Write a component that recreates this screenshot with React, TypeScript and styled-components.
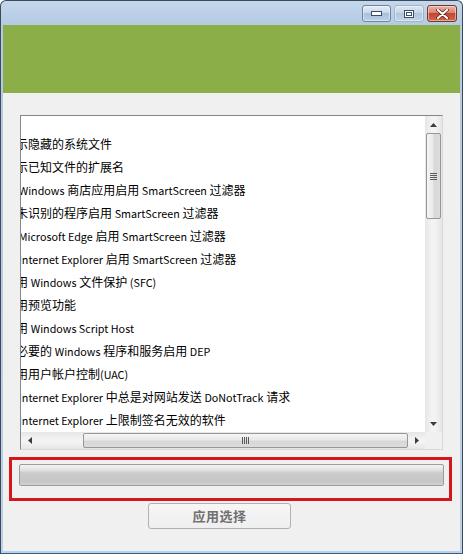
import { useLayoutEffect, useRef } from "react";
import styled, { createGlobalStyle, css } from "styled-components";

const GlobalStyle = createGlobalStyle`
    html, body {
        margin: 0;
        padding: 0;
        background: #ffffff;
    }
    body {
        font-family: "Noto Sans CJK SC", "DejaVu Sans", sans-serif;
    }
`

const Window = styled.div`
    box-sizing: border-box;
    width: 463px;
    height: 554px;
    display: flex;
    flex-direction: column;
    border: 1px solid #3d4a5a;
    border-bottom-color: #2f5f86;
    border-radius: 6px 6px 0 0;
    background: linear-gradient(to bottom, #c4d7ec 0px, #b3cae3 24px, #bcd0e6 100%);
    overflow: hidden;
`

const TitleBar = styled.div`
    height: 24px;
    flex-shrink: 0;
    display: flex;
    justify-content: flex-end;
    align-items: flex-start;
    gap: 3px;
    padding: 4px 5px 0 0;
    box-sizing: border-box;
`

const captionVariants = {
    min: css`
        width: 29px;
        border-color: #6f84a2;
        background: linear-gradient(to bottom, #e6eef8 0%, #c9d8ea 45%, #aac0db 50%, #bcd0e6 100%);
    `,
    max: css`
        width: 30px;
        border-color: #9fb4cf;
        background: linear-gradient(to bottom, #dbe6f2 0%, #c6d6e9 45%, #b2c7df 50%, #c2d4e8 100%);
    `,
    close: css`
        width: 30px;
        border-color: #7b3326;
        background: linear-gradient(to bottom, #eab3a5 0%, #d9826c 45%, #c4472f 50%, #d0664c 100%);
    `,
}

const CaptionButton = styled.div<{ $kind: keyof typeof captionVariants }>`
    box-sizing: border-box;
    height: 17px;
    border: 1px solid;
    border-radius: 3px;
    display: flex;
    align-items: center;
    justify-content: center;
    box-shadow: inset 0 0 0 1px rgba(255, 255, 255, 0.45);
    ${p => captionVariants[p.$kind]}
`

const Client = styled.div`
    flex: 1;
    margin: 0 2px 2px 2px;
    background: #f0f0f0;
    display: flex;
    flex-direction: column;
`

const Banner = styled.div`
    height: 68px;
    flex-shrink: 0;
    background: #8bae49;
`

const Body = styled.div`
    flex: 1;
    display: flex;
    flex-direction: column;
    padding: 22px 0 0 0;
`

const ListBox = styled.div`
    box-sizing: border-box;
    height: 335px;
    margin: 0 17px 0 17px;
    border: 1px solid #828790;
    border-right-color: #d5d9de;
    border-bottom-color: #d5d9de;
    background: #ffffff;
    display: grid;
    grid-template-columns: 1fr 17px;
    grid-template-rows: 1fr 17px;
`

const Viewport = styled.div`
    overflow: hidden;
    min-width: 0;
    min-height: 0;
`

const Rows = styled.div`
    width: 464px;
    padding-top: 16px;
`

const Row = styled.div`
    height: 23px;
    display: flex;
    align-items: center;
    gap: 8px;
    padding-left: 20px;
    white-space: nowrap;
    font-family: "Noto Sans CJK SC", sans-serif;
    font-size: 12px;
    color: #000;
`

// the latin parts of the labels are set smaller, like Microsoft YaHei draws them
const Latin = styled.span`
    font-size: 10.75px;
`

const Check = styled.span`
    box-sizing: border-box;
    width: 13px;
    height: 13px;
    flex-shrink: 0;
    border: 1px solid #8f8f8f;
    background: linear-gradient(135deg, #dcdcdc, #fbfbfb);
`

const VScroll = styled.div`
    display: flex;
    flex-direction: column;
    background: linear-gradient(to right, #e6e6e6, #f3f3f3 40%, #f3f3f3 60%, #e6e6e6);
`

const HScroll = styled.div`
    display: flex;
    background: linear-gradient(to bottom, #e6e6e6, #f3f3f3 40%, #f3f3f3 60%, #e6e6e6);
`

const Corner = styled.div`
    background: #f0f0f0;
`

const ArrowButton = styled.div`
    width: 17px;
    height: 17px;
    flex-shrink: 0;
    display: flex;
    align-items: center;
    justify-content: center;
`

const Track = styled.div<{ $size: number }>`
    flex: 0 0 ${p => p.$size}px;
`

const Thumb = styled.div<{ $vertical?: boolean; $size: number }>`
    box-sizing: border-box;
    flex: 0 0 ${p => p.$size}px;
    border: 1px solid #979797;
    border-radius: 2px;
    display: flex;
    align-items: center;
    justify-content: center;
    ${p => p.$vertical ? css`
        margin: 0 1px;
        background: linear-gradient(to right, #f5f5f5, #e9e9e9 45%, #d8d8d8 55%, #dcdcdc);
    ` : css`
        margin: 1px 0;
        background: linear-gradient(to bottom, #f5f5f5, #e9e9e9 45%, #d8d8d8 55%, #dcdcdc);
    `}
`

const Fill = styled.div`
    flex: 1;
`

const Highlight = styled.div`
    box-sizing: border-box;
    margin: 7px 8px 0 6px;
    height: 44px;
    border: 3px solid #d4161d;
    padding: 4px 5px 0 7px;
`

const Progress = styled.div`
    box-sizing: border-box;
    height: 22px;
    border: 1px solid #9c9c9c;
    border-radius: 2px;
    background: linear-gradient(to bottom, #f3f3f3 0%, #e2e2e2 25%, #cbcbcb 40%, #c6c6c6 80%, #d2d2d2 100%);
`

const ApplyButton = styled.button`
    box-sizing: border-box;
    margin: 2px 0 0 145px;
    width: 143px;
    height: 26px;
    border: 1px solid #b1b1b1;
    border-radius: 3px;
    background: linear-gradient(to bottom, #f6f6f6, #efefef);
    font-family: "Noto Sans CJK SC", "DejaVu Sans", sans-serif;
    font-size: 13px;
    font-weight: bold;
    color: #707070;
    letter-spacing: 0.5px;
    padding: 0;
    line-height: 24px;
`

const items = [
    "显示隐藏的系统文件",
    "显示已知文件的扩展名",
    "为 Windows 商店应用启用 SmartScreen 过滤器",
    "为未识别的程序启用 SmartScreen 过滤器",
    "为 Microsoft Edge 启用 SmartScreen 过滤器",
    "为 Internet Explorer 启用 SmartScreen 过滤器",
    "启用 Windows 文件保护 (SFC)",
    "启用预览功能",
    "启用 Windows Script Host",
    "为必要的 Windows 程序和服务启用 DEP",
    "启用用户帐户控制(UAC)",
    "在 Internet Explorer 中总是对网站发送 DoNotTrack 请求",
    "在 Internet Explorer 上限制签名无效的软件",
]

function Label({ text }: { text: string }) {
    const parts = text.split(/([A-Za-z(][A-Za-z() ]*[A-Za-z)])/)
    return (
        <span>
            {parts.map((part, i) => i % 2 ? <Latin key={i}>{part}</Latin> : part)}
        </span>
    )
}

function Arrow({ dir }: { dir: "up" | "down" | "left" | "right" }) {
    const pts = {
        up: "0,4 3.5,0 7,4",
        down: "0,0 3.5,4 7,0",
        left: "4,0 0,3.5 4,7",
        right: "0,0 4,3.5 0,7",
    }[dir]
    const vertical = dir === "up" || dir === "down"
    return (
        <svg width={vertical ? 7 : 4} height={vertical ? 4 : 7} viewBox={vertical ? "0 0 7 4" : "0 0 4 7"}>
            <polygon points={pts} fill="#3c3c3c" />
        </svg>
    )
}

function Grip({ vertical }: { vertical?: boolean }) {
    return vertical ? (
        <svg width="7" height="7" viewBox="0 0 7 7">
            {[0, 2, 4, 6].map(y => <rect key={y} x="0" y={y} width="7" height="1" fill="#5a5a5a" />)}
        </svg>
    ) : (
        <svg width="7" height="7" viewBox="0 0 7 7">
            {[0, 2, 4, 6].map(x => <rect key={x} x={x} y="0" width="1" height="7" fill="#5a5a5a" />)}
        </svg>
    )
}

export default function App() {
    const viewport = useRef<HTMLDivElement>(null)

    // list is scrolled to the right, like in the screenshot
    useLayoutEffect(() => {
        if (viewport.current) viewport.current.scrollLeft = 58
    }, [])

    return (
        <>
            <GlobalStyle />
            <Window>
                <TitleBar>
                    <CaptionButton $kind="min">
                        <svg width="11" height="5" viewBox="0 0 11 5">
                            <rect x="0.5" y="0.5" width="10" height="4" fill="#fff" stroke="#3b4d66" />
                        </svg>
                    </CaptionButton>
                    <CaptionButton $kind="max">
                        <svg width="10" height="8" viewBox="0 0 10 8">
                            <rect x="0.5" y="0.5" width="9" height="7" fill="#fff" stroke="#3b4d66" />
                            <rect x="2.5" y="2.5" width="5" height="3" fill="none" stroke="#3b4d66" />
                        </svg>
                    </CaptionButton>
                    <CaptionButton $kind="close">
                        <svg width="13" height="10" viewBox="0 0 13 10">
                            <path d="M2 1 L11 9 M11 1 L2 9" stroke="#5a2016" strokeWidth="3.6" strokeLinecap="round" />
                            <path d="M2 1 L11 9 M11 1 L2 9" stroke="#fff" strokeWidth="2.2" strokeLinecap="round" />
                        </svg>
                    </CaptionButton>
                </TitleBar>
                <Client>
                    <Banner />
                    <Body>
                        <ListBox>
                            <Viewport ref={viewport}>
                                <Rows>
                                    {items.map(item => (
                                        <Row key={item}>
                                            <Check />
                                            <Label text={item} />
                                        </Row>
                                    ))}
                                </Rows>
                            </Viewport>
                            <VScroll>
                                <ArrowButton><Arrow dir="up" /></ArrowButton>
                                <Thumb $vertical $size={86}><Grip vertical /></Thumb>
                                <Fill />
                                <ArrowButton><Arrow dir="down" /></ArrowButton>
                            </VScroll>
                            <HScroll>
                                <ArrowButton><Arrow dir="left" /></ArrowButton>
                                <Track $size={45} />
                                <Thumb $size={325}><Grip /></Thumb>
                                <Fill />
                                <ArrowButton><Arrow dir="right" /></ArrowButton>
                            </HScroll>
                            <Corner />
                        </ListBox>
                        <Highlight>
                            <Progress />
                        </Highlight>
                        <ApplyButton disabled>应用选择</ApplyButton>
                    </Body>
                </Client>
            </Window>
        </>
    )
}
